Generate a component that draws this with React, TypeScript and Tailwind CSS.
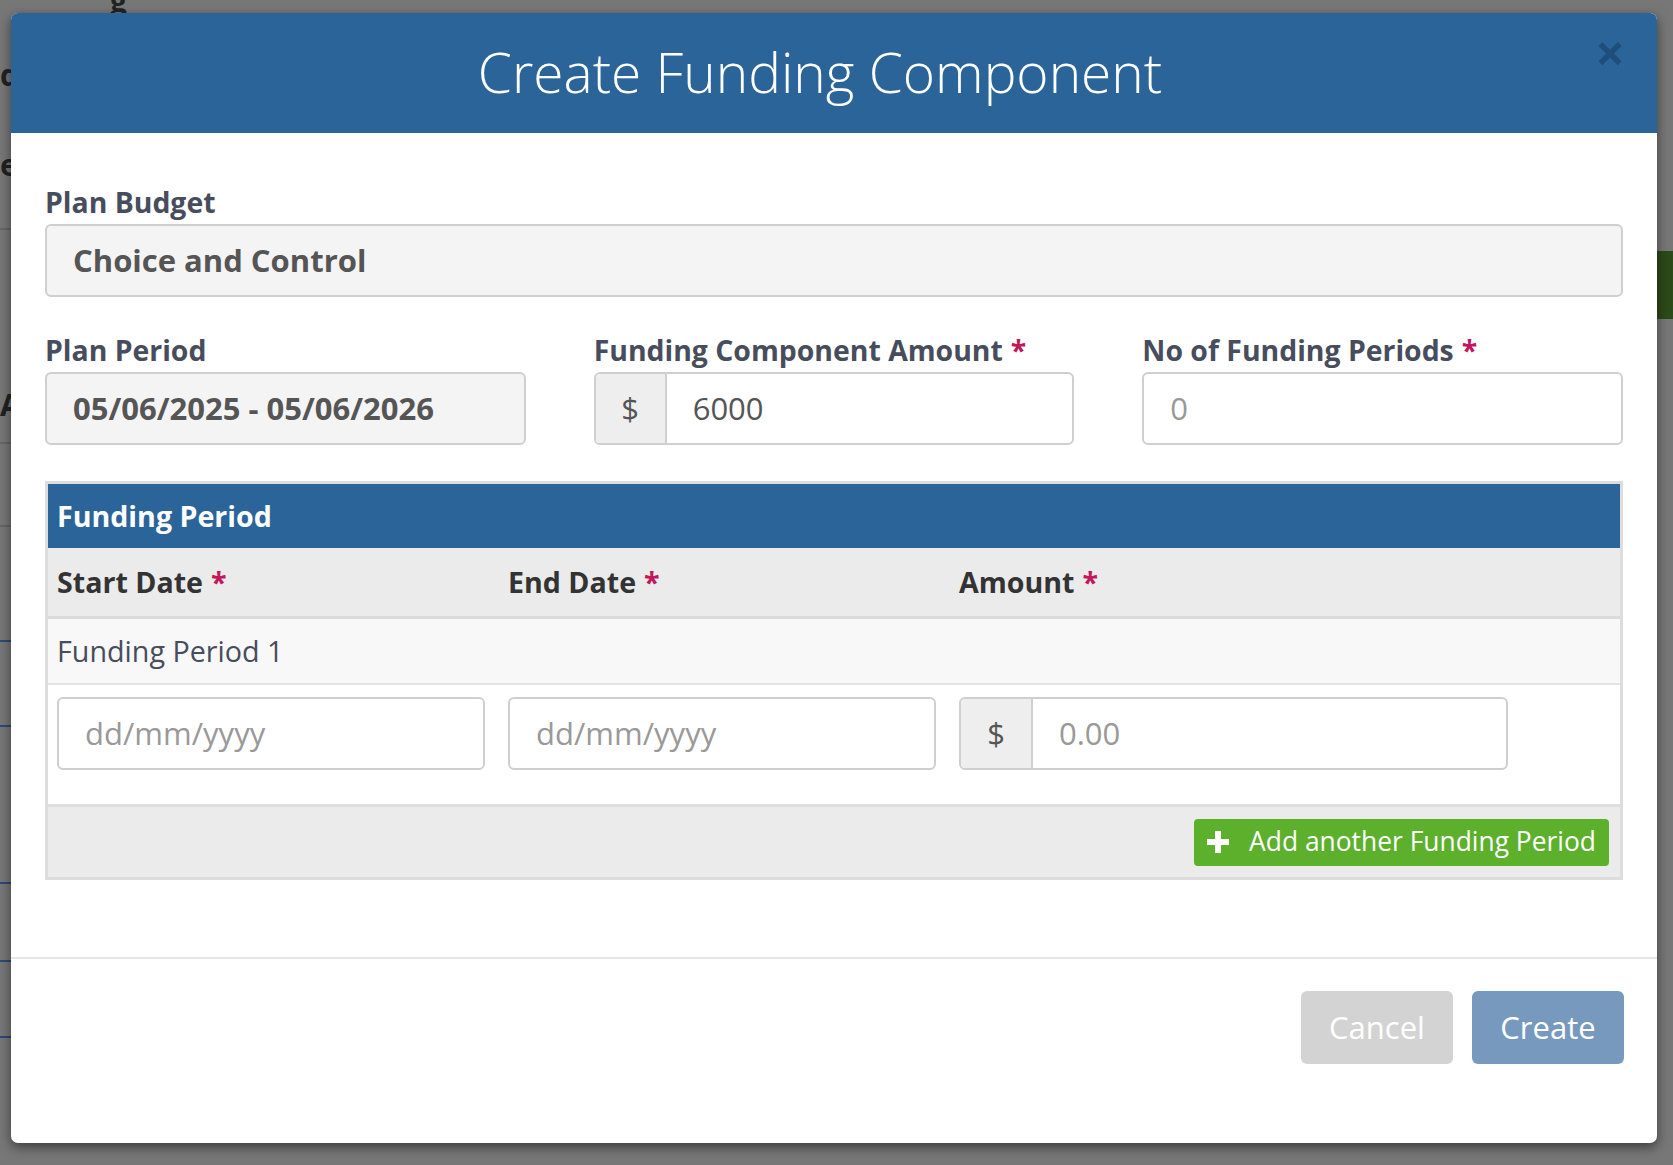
import React from "react";

const font = { fontFamily: '"Open Sans", "Noto Sans", Arial, sans-serif' };

function Req() {
  return <span className="text-[#c2185b] ml-[8px]">*</span>;
}

export default function App() {
  return (
    <div
      className="relative w-[1673px] h-[1165px] bg-[#777777] overflow-hidden"
      style={font}
    >
      {/* faint underlying page bits */}
      <div className="absolute left-[1655px] top-[251px] w-[20px] h-[68px] bg-[#2c4a1a]" />
      <div className="absolute left-0 top-[60px] text-[#222] text-[30px] font-bold leading-none">d</div>
      <div className="absolute left-0 top-[150px] text-[#222] text-[30px] font-bold leading-none">e</div>
      <div className="absolute left-0 top-[390px] text-[#222] text-[30px] font-bold leading-none">A</div>
      <div className="absolute left-[110px] top-[-14px] text-[#222] text-[30px] font-bold leading-none">g</div>
      <div className="absolute left-0 top-[228px] w-[12px] h-[2px] bg-[#666]" />
      <div className="absolute left-0 top-[442px] w-[12px] h-[2px] bg-[#666]" />
      <div className="absolute left-0 top-[525px] w-[12px] h-[2px] bg-[#666]" />
      <div className="absolute left-0 top-[640px] w-[12px] h-[2px] bg-[#2b4a7a]" />
      <div className="absolute left-0 top-[725px] w-[12px] h-[2px] bg-[#2b4a7a]" />
      <div className="absolute left-0 top-[882px] w-[12px] h-[2px] bg-[#2b4a7a]" />
      <div className="absolute left-0 top-[960px] w-[12px] h-[2px] bg-[#2b4a7a]" />
      <div className="absolute left-0 top-[1036px] w-[12px] h-[2px] bg-[#2b4a7a]" />

      <div className="absolute left-[11px] top-[13px] w-[1646px] h-[1130px] bg-white rounded-[7px] shadow-[0_4px_12px_rgba(0,0,0,0.5)] overflow-hidden flex flex-col">
        {/* header */}
        <div className="relative h-[120px] bg-[#2b6499] flex items-center justify-center pr-[28px] shrink-0">
          <h1 className="text-white text-[55px] font-light leading-none mb-[4px]">
            Create Funding Component
          </h1>
          <span className="absolute right-[32px] top-[13px] text-[#1f4e7a] text-[52px] font-bold leading-none">
            ×
          </span>
        </div>

        {/* body */}
        <div className="px-[34px] pt-[49px] pb-[77px] border-b-2 border-[#e5e5e5]">
          <label className="block text-[28.4px] font-bold text-[#474d5c] leading-[40px] mb-[2px]">
            Plan Budget
          </label>
          <div className="h-[73px] bg-[#f4f4f4] border-2 border-[#cfcfcf] rounded-[6px] flex items-center px-[26px] text-[31px] font-bold text-[#555]">
            Choice and Control
          </div>

          <div className="grid grid-cols-3 gap-x-[68px] mt-[33px]">
            <div>
              <label className="block text-[28.4px] font-bold text-[#474d5c] leading-[40px] mb-[2px]">
                Plan Period
              </label>
              <div className="h-[73px] bg-[#f4f4f4] border-2 border-[#cfcfcf] rounded-[6px] flex items-center px-[26px] text-[31px] font-bold text-[#555]">
                05/06/2025 - 05/06/2026
              </div>
            </div>
            <div>
              <label className="block text-[28.4px] font-bold text-[#474d5c] leading-[40px] mb-[2px]">
                Funding Component Amount<Req />
              </label>
              <div className="h-[73px] border-2 border-[#cfcfcf] rounded-[6px] flex overflow-hidden">
                <div className="w-[71px] bg-[#eeeeee] border-r-2 border-[#cfcfcf] flex items-center justify-center text-[31px] text-[#555]">
                  $
                </div>
                <div className="flex-1 flex items-center px-[26px] text-[31px] text-[#555]">6000</div>
              </div>
            </div>
            <div>
              <label className="block text-[28.4px] font-bold text-[#474d5c] leading-[40px] mb-[2px]">
                No of Funding Periods<Req />
              </label>
              <div className="h-[73px] border-2 border-[#cfcfcf] rounded-[6px] flex items-center px-[26px] text-[31px] text-[#999]">
                0
              </div>
            </div>
          </div>

          {/* funding period table */}
          <div className="mt-[36px] border-[3px] border-[#dddddd]">
            <div className="h-[64px] bg-[#2b6499] flex items-center px-[9px] text-white text-[28.6px] font-bold">
              Funding Period
            </div>
            <div className="h-[71px] bg-[#ebebeb] border-b-[3px] border-[#dadada] grid grid-cols-[451px_451px_1fr] items-center px-[9px] text-[28.6px] font-bold text-[#333]">
              <div>Start Date<Req /></div>
              <div>End Date<Req /></div>
              <div>Amount<Req /></div>
            </div>
            <div className="h-[66px] bg-[#f8f8f8] border-b-2 border-[#e3e3e3] flex items-center px-[9px] text-[28.7px] text-[#474d5c]">
              Funding Period 1
            </div>
            <div className="h-[122px] bg-white border-b-[3px] border-[#dedede] px-[9px] pt-[12px]">
              <div className="grid grid-cols-[428px_428px_549px] gap-x-[23px]">
                <div className="h-[73px] border-2 border-[#cfcfcf] rounded-[6px] flex items-center px-[26px] text-[31px] text-[#999]">
                  dd/mm/yyyy
                </div>
                <div className="h-[73px] border-2 border-[#cfcfcf] rounded-[6px] flex items-center px-[26px] text-[31px] text-[#999]">
                  dd/mm/yyyy
                </div>
                <div className="h-[73px] border-2 border-[#cfcfcf] rounded-[6px] flex overflow-hidden">
                  <div className="w-[72px] bg-[#eeeeee] border-r-2 border-[#cfcfcf] flex items-center justify-center text-[31px] text-[#555]">
                    $
                  </div>
                  <div className="flex-1 flex items-center px-[26px] text-[31px] text-[#999]">0.00</div>
                </div>
              </div>
            </div>
            <div className="h-[70px] bg-[#ebebeb] flex items-center justify-end pr-[11px]">
              <button className="h-[47px] bg-[#5cb02c] rounded-[4px] flex items-center pl-[13px] pr-[13px] text-white text-[26.4px]">
                <svg width="22" height="22" viewBox="0 0 22 22" className="mr-[20px]">
                  <path d="M8 0h6v8h8v6h-8v8H8v-8H0V8h8z" fill="white" />
                </svg>
                Add another Funding Period
              </button>
            </div>
          </div>
        </div>

        {/* footer */}
        <div className="flex justify-end gap-[19px] pr-[33px] pt-[32px]">
          <button className="w-[152px] h-[73px] rounded-[6px] bg-[#d3d3d3] text-white text-[31px]">
            Cancel
          </button>
          <button className="w-[152px] h-[73px] rounded-[6px] bg-[#7699bd] text-white text-[31px]">
            Create
          </button>
        </div>
      </div>
    </div>
  );
}
